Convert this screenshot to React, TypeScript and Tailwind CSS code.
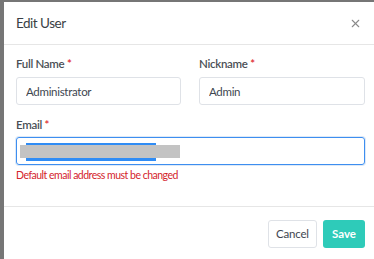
import { X } from "lucide-react";

export default function App() {
  return (
    <div className="w-[374px] h-[259px] overflow-hidden bg-[#767676] flex pt-[2px] pl-[4px] font-['Lato','Noto_Sans',sans-serif]">
      <div className="w-[373px] shrink-0 bg-white flex flex-col">
        {/* header */}
        <div className="h-[43px] px-3 flex items-center justify-between border-b border-[#e6e6e6]">
          <h2 className="text-[13.5px] tracking-[-0.5px] text-[#3a3f45]">Edit User</h2>
          <X className="w-[13px] h-[13px] text-[#8a8a8a] mr-[3px]" strokeWidth={2} />
        </div>

        {/* body */}
        <div className="px-3 pt-[11px] pb-[24px] border-b border-[#e6e6e6]">
          <div className="grid grid-cols-[165px_166px] gap-x-[18px]">
            <div>
              <label className="block text-[11.5px] font-semibold tracking-[-0.3px] text-[#4a4f55] leading-[16px] mb-[5px]">
                Full Name <span className="text-[#e0262c]">*</span>
              </label>
              <input
                readOnly
                value="Administrator"
                className="w-full h-[28px] px-[9px] border border-[#dfe2e7] rounded-[3px] text-[11.5px] tracking-[-0.3px] text-[#3e4650] outline-none"
              />
            </div>
            <div>
              <label className="block text-[11.5px] font-semibold tracking-[-0.3px] text-[#4a4f55] leading-[16px] mb-[5px]">
                Nickname <span className="text-[#e0262c]">*</span>
              </label>
              <input
                readOnly
                value="Admin"
                className="w-full h-[28px] px-[9px] border border-[#dfe2e7] rounded-[3px] text-[11.5px] tracking-[-0.3px] text-[#3e4650] outline-none"
              />
            </div>
          </div>

          <label className="block mt-[12px] text-[11.5px] font-semibold tracking-[-0.3px] text-[#4a4f55] leading-[16px] mb-[4px]">
            Email <span className="text-[#e0262c]">*</span>
          </label>
          <div className="relative h-[28px] border border-[#3d8ef0] rounded-[3px] shadow-[0_0_0_1px_#dde9f7]">
            <div className="absolute left-[9px] top-[5px] w-[130px] h-[2px] bg-[#2f8cf5]" />
            <div className="absolute left-[3px] top-[7px] w-[160px] h-[13px] bg-[#c3c3c3]" />
            <div className="absolute left-[9px] top-[20px] w-[130px] h-[3px] bg-[#2f8cf5]" />
          </div>
          <p className="mt-[3px] text-[10.5px] tracking-[-0.5px] leading-[14px] text-[#d4242c]">
            Default email address must be changed
          </p>
        </div>

        {/* footer */}
        <div className="px-3 pt-[13px] flex justify-end gap-[6px]">
          <button className="h-[28px] w-[49px] border border-[#dfe2e7] rounded-[3px] text-[11.5px] tracking-[-0.2px] text-[#3e4650] bg-white">
            Cancel
          </button>
          <button className="h-[28px] w-[42px] rounded-[3px] text-[11.5px] font-bold text-white bg-[#2ecbb9]">
            Save
          </button>
        </div>
      </div>
    </div>
  );
}
